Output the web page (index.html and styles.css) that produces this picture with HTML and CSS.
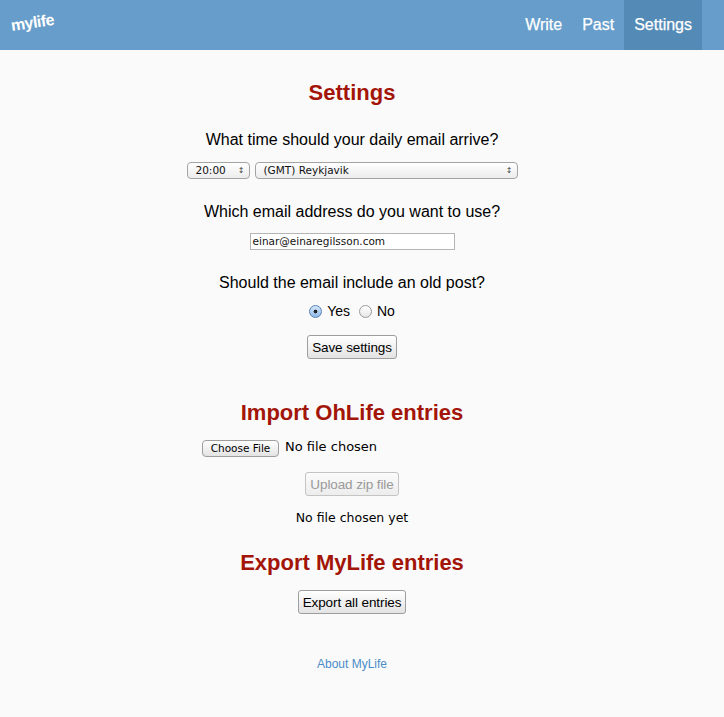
FILE: index.html
```html
<!DOCTYPE html>
<html>
<head>
<meta charset="utf-8">
<link rel="stylesheet" href="styles.css">
</head>
<body>
<header class="navbar">
  <a class="brand">mylife</a>
  <nav class="nav">
    <a class="nav-link">Write</a>
    <a class="nav-link">Past</a>
    <a class="nav-link active">Settings</a>
  </nav>
</header>
<main class="content">
  <h1 class="title t-settings">Settings</h1>
  <p class="question q1">What time should your daily email arrive?</p>
  <div class="row selects">
    <div class="select sel-time"><span>20:00</span><span class="arrows">&#x2195;</span></div>
    <div class="select sel-zone"><span>(GMT) Reykjavik</span><span class="arrows">&#x2195;</span></div>
  </div>
  <p class="question q2">Which email address do you want to use?</p>
  <div class="row email-row"><div class="text-input">einar@einaregilsson.com</div></div>
  <p class="question q3">Should the email include an old post?</p>
  <div class="row radios">
    <span class="radio checked"></span><span class="radio-label">Yes</span>
    <span class="radio"></span><span class="radio-label">No</span>
  </div>
  <div class="row"><button class="btn btn-save">Save settings</button></div>

  <h2 class="title t-import">Import OhLife entries</h2>
  <div class="row file-row">
    <div class="file-input"><span class="file-btn">Choose File</span><span class="file-text">No file chosen</span></div>
  </div>
  <div class="row upload-row"><button class="btn btn-disabled" disabled>Upload zip file</button></div>
  <p class="status">No file chosen yet</p>

  <h2 class="title t-export">Export MyLife entries</h2>
  <div class="row export-row"><button class="btn btn-export">Export all entries</button></div>

  <footer class="footer"><a class="about">About MyLife</a></footer>
</main>
</body>
</html>
```

FILE: styles.css
```css
html, body {
  margin: 0;
  padding: 0;
  background: #fafafa;
  font-family: "Liberation Sans", Arial, sans-serif;
  color: #000;
}
.navbar {
  height: 50px;
  background: #669dca;
  display: flex;
  align-items: stretch;
  justify-content: space-between;
  padding: 0 22px 0 11px;
}
.brand {
  color: #fff;
  font-weight: bold;
  font-size: 16px;
  line-height: 50px;
  display: inline-block;
  transform: rotate(-8deg);
  transform-origin: 50% 50%;
  margin-top: -2px;
  letter-spacing: -0.5px;
}
.nav { display: flex; }
.nav-link {
  color: #fff;
  font-size: 16px;
  line-height: 50px;
  padding: 0 10px;
  -webkit-text-stroke: 0.25px #fff;
}
.nav-link.active { background: #538ab6; }

.content {
  width: 704px;
  text-align: center;
  display: flex;
  flex-direction: column;
  align-items: center;
}
.title {
  margin: 0;
  color: #a31508;
  font-size: 22px;
  line-height: 26px;
  font-weight: bold;
}
.t-settings { margin-top: 30px; }
.t-import { margin-top: 41px; }
.t-export { margin-top: 22px; }
.question {
  margin: 0;
  font-size: 16px;
  line-height: 20px;
}
.q1 { margin-top: 24px; }
.q2 { margin-top: 23px; }
.q3 { margin-top: 23px; }
.row { display: flex; justify-content: center; align-items: center; }

.selects { margin-top: 12px; gap: 5px; }
.select {
  box-sizing: border-box;
  height: 17px;
  border: 1px solid #a4a4a4;
  border-radius: 4px;
  background: linear-gradient(#ffffff, #ececec);
  font-family: "DejaVu Sans", sans-serif;
  font-size: 10.5px;
  line-height: 15px;
  display: flex;
  justify-content: space-between;
  padding: 0 4px 0 8px;
  color: #111;
}
.sel-time { width: 63px; }
.sel-zone { width: 263px; }
.arrows { font-size: 8px; color: #444; }

.email-row { margin-top: 11px; }
.text-input {
  box-sizing: border-box;
  width: 205px;
  height: 17px;
  border: 1px solid #b5b5b5;
  background: #fff;
  font-family: "DejaVu Sans", sans-serif;
  font-size: 10.5px;
  line-height: 15px;
  text-align: left;
  padding-left: 2px;
  color: #111;
}

.radios { margin-top: 8px; height: 20px; font-size: 14px; }
.radio {
  box-sizing: border-box;
  width: 13px;
  height: 13px;
  border-radius: 50%;
  border: 1px solid #9a9a9a;
  background: linear-gradient(#fff, #e6e6e6);
  margin-right: 5px;
}
.radio.checked {
  border-color: #5a82b5;
  background: radial-gradient(circle, #222 0 1.6px, transparent 2.2px), linear-gradient(#d6e7fa, #8db8e8);
}
.radio-label { margin-right: 9px; }
.radio-label:last-child { margin-right: 0; }

.btn {
  box-sizing: border-box;
  height: 24px;
  border: 1px solid #9e9e9e;
  border-radius: 3px;
  background: linear-gradient(#ffffff, #e3e3e3);
  font-family: "Liberation Sans", Arial, sans-serif;
  font-size: 13.5px;
  color: #000;
  padding: 0;
  white-space: nowrap;
  letter-spacing: -0.1px;
}
.btn-save { margin-top: 14px; width: 90px; }
.btn-disabled {
  color: #9a9a9a;
  border-color: #c4c4c4;
  width: 94px;
  background: linear-gradient(#fbfbfb, #ededed);
}
.btn-export { width: 108px; }

.file-row { margin-top: 14px; }
.file-input {
  width: 300px;
  display: flex;
  align-items: center;
  text-align: left;
}
.file-btn {
  box-sizing: border-box;
  width: 77px;
  height: 17px;
  border: 1px solid #9e9e9e;
  border-radius: 4px;
  background: linear-gradient(#ffffff, #e3e3e3);
  font-family: "DejaVu Sans", sans-serif;
  font-size: 10.5px;
  line-height: 15px;
  text-align: center;
}
.file-text {
  margin-left: 6px;
  font-family: "DejaVu Sans", sans-serif;
  font-size: 13px;
  margin-top: -5px;
}
.upload-row { margin-top: 15px; }
.status {
  margin: 12px 0 0;
  font-family: "DejaVu Sans", sans-serif;
  font-size: 12.5px;
  line-height: 20px;
}
.export-row { margin-top: 14px; }
.footer { margin-top: 40px; }
.about {
  color: #4a8cc7;
  font-size: 12px;
  line-height: 16px;
}
```
